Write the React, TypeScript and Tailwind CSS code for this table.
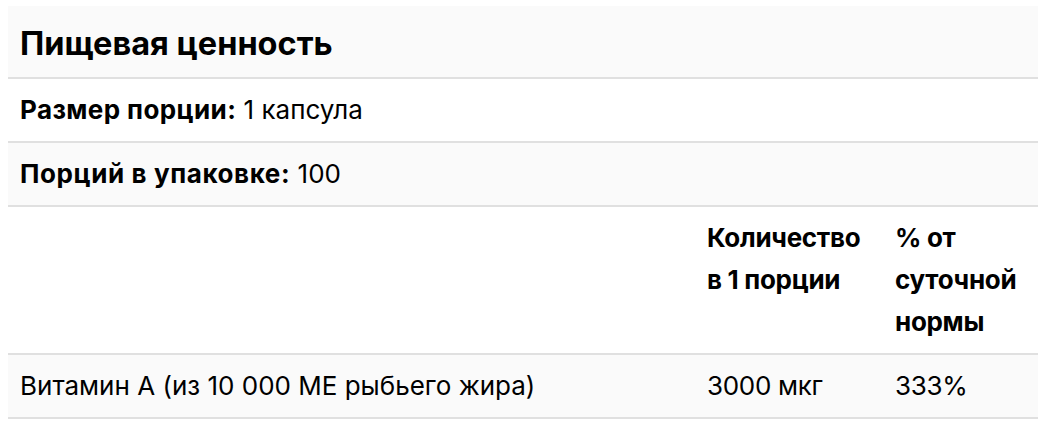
export default function App() {
  const font = { fontFamily: 'Inter, "Liberation Sans", Arial, sans-serif' };
  return (
    <div className="pt-[6px] pl-[8px] text-black" style={font}>
      <div className="w-[1030px]">
        <div className="bg-[#fafafa] border-b-2 border-[#e0e0e0] pl-[12px] pt-[12px] pb-[8px] text-[32.5px] leading-[51px] font-bold">
          Пищевая ценность
        </div>
        <div className="border-b-2 border-[#e0e0e0] pl-[12px] py-[10px] text-[26px] leading-[42px]">
          <span className="font-bold tracking-[0.4px]">Размер порции:</span> 1 капсула
        </div>
        <div className="bg-[#fafafa] border-b-2 border-[#e0e0e0] pl-[12px] py-[10px] text-[26px] leading-[42px]">
          <span className="font-bold tracking-[0.6px]">Порций в упаковке:</span> 100
        </div>
        <div className="grid grid-cols-[687px_188px_155px] border-b-2 border-[#e0e0e0] text-[26px] leading-[42px] font-bold tracking-[-0.3px]">
          <div className="py-[10px] pl-[12px]"></div>
          <div className="py-[10px] pl-[12px]">Количество в&nbsp;1&nbsp;порции</div>
          <div className="py-[10px] pl-[12px]">% от суточной нормы</div>
        </div>
        <div className="grid grid-cols-[687px_188px_155px] bg-[#fafafa] border-b-2 border-[#e0e0e0] text-[26px] leading-[42px]">
          <div className="py-[10px] pl-[12px]">Витамин А (из 10 000 МЕ рыбьего жира)</div>
          <div className="py-[10px] pl-[12px] tracking-[-0.3px]">3000 мкг</div>
          <div className="py-[10px] pl-[12px] tracking-[-0.3px]">333%</div>
        </div>
      </div>
    </div>
  );
}
